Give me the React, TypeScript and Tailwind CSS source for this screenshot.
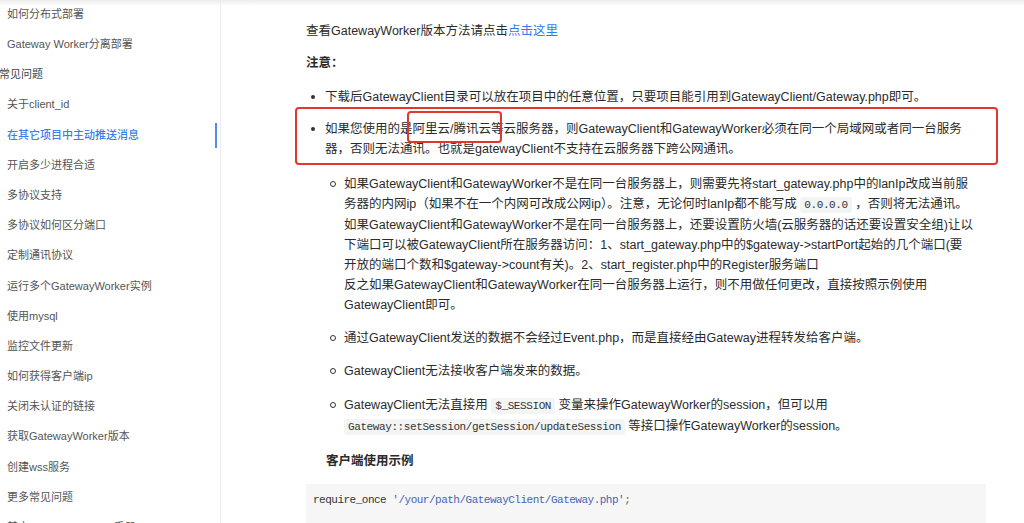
import React from 'react';

const navItems = [
  { label: '如何分布式部署' },
  { label: 'Gateway Worker分离部署' },
  { label: '常见问题', heading: true },
  { label: '关于client_id' },
  { label: '在其它项目中主动推送消息', active: true },
  { label: '开启多少进程合适' },
  { label: '多协议支持' },
  { label: '多协议如何区分端口' },
  { label: '定制通讯协议' },
  { label: '运行多个GatewayWorker实例' },
  { label: '使用mysql' },
  { label: '监控文件更新' },
  { label: '如何获得客户端ip' },
  { label: '关闭未认证的链接' },
  { label: '获取GatewayWorker版本' },
  { label: '创建wss服务' },
  { label: '更多常见问题' },
  { label: '其它 GatewayWorker 手册' },
];

const Code = ({ children }: { children: React.ReactNode }) => (
  <span className="rounded-[3px] bg-[#f3f4f4] px-[4px] py-[2px] font-['Liberation_Mono',monospace] text-[11px] tracking-[-0.4px] text-[#333]">
    {children}
  </span>
);

const Disc = () => (
  <span className="flex w-[19px] shrink-0 justify-start pl-[5px] pt-[8px]">
    <span className="h-[4px] w-[4px] rounded-full bg-[#333]" />
  </span>
);

const Circle = () => (
  <span className="flex w-[19px] shrink-0 justify-start pl-[5px] pt-[7px]">
    <span className="h-[6px] w-[6px] rounded-full border border-[#333]" />
  </span>
);

const Sidebar = () => (
  <aside className="w-[221px] shrink-0 border-r border-[#eaecef]">
    <div className="mt-[-1px] text-[11px]">
      {navItems.map((item) => (
        <div key={item.label} className="relative flex h-[30.2px] items-center">
          {item.heading ? (
            <span className="ml-[-1px] text-[#444]">{item.label}</span>
          ) : (
            <span className={`pl-[7px] ${item.active ? 'font-medium text-[#3d7ee8]' : 'text-[#555]'}`}>
              {item.label}
            </span>
          )}
          {item.active && <span className="absolute right-[3px] top-[3px] h-[25px] w-[2px] bg-[#4f8cf0]" />}
        </div>
      ))}
    </div>
  </aside>
);

export default function App() {
  return (
    <div className="relative h-[523px] w-[1024px] overflow-hidden bg-white font-['Liberation_Sans','Noto_Sans_CJK_SC',sans-serif] text-[12.5px] text-[#2b2b2b]">
      {/* header shadow */}
      <div className="absolute left-0 top-0 z-10 h-[6px] w-full bg-gradient-to-b from-[#ececec] to-transparent" />

      <div className="flex h-full">
        <Sidebar />

        <main className="pl-[85px]">
          <div className="relative w-[680px] pt-[21px] leading-5">
            <p>
              查看GatewayWorker版本方法请点击<a href="#" className="text-[#2f7cf0]">点击这里</a>
            </p>
            <p className="mt-3 font-bold">注意：</p>

            <ul className="mt-[14px]">
              <li className="flex">
                <Disc />
                <span className="whitespace-nowrap">下载后GatewayClient目录可以放在项目中的任意位置，只要项目能引用到GatewayClient/Gateway.php即可。</span>
              </li>
              <li className="mt-[12px] flex">
                <Disc />
                <div>
                  <div className="whitespace-nowrap">
                    如果您使用的是阿里云/腾讯云等云服务器，则GatewayClient和GatewayWorker必须在同一个局域网或者同一台服务
                    <br />
                    器，否则无法通讯。也就是gatewayClient不支持在云服务器下跨公网通讯。
                  </div>

                  <ul className="mt-[15px]">
                    <li className="flex">
                      <Circle />
                      <div className="whitespace-nowrap">
                        如果GatewayClient和GatewayWorker不是在同一台服务器上，则需要先将start_gateway.php中的lanIp改成当前服
                        <br />
                        务器的内网ip（如果不在一个内网可改成公网ip）。注意，无论何时lanIp都不能写成 <Code>0.0.0.0</Code> ，否则将无法通讯。
                        <br />
                        如果GatewayClient和GatewayWorker不是在同一台服务器上，还要设置防火墙(云服务器的话还要设置安全组)让以
                        <br />
                        下端口可以被GatewayClient所在服务器访问：1、start_gateway.php中的$gateway-&gt;startPort起始的几个端口(要
                        <br />
                        开放的端口个数和$gateway-&gt;count有关)。2、start_register.php中的Register服务端口
                        <br />
                        反之如果GatewayClient和GatewayWorker在同一台服务器上运行，则不用做任何更改，直接按照示例使用
                        <br />
                        GatewayClient即可。
                      </div>
                    </li>
                    <li className="mt-[13px] flex">
                      <Circle />
                      <span className="whitespace-nowrap">通过GatewayClient发送的数据不会经过Event.php，而是直接经由Gateway进程转发给客户端。</span>
                    </li>
                    <li className="mt-[13px] flex">
                      <Circle />
                      <span>GatewayClient无法接收客户端发来的数据。</span>
                    </li>
                    <li className="mt-[14px] flex">
                      <Circle />
                      <div className="whitespace-nowrap">
                        GatewayClient无法直接用 <Code>$_SESSION</Code> 变量来操作GatewayWorker的session，但可以用
                        <br />
                        <Code>Gateway::setSession/getSession/updateSession</Code> 等接口操作GatewayWorker的session。
                      </div>
                    </li>
                  </ul>

                  <h4 className="mt-[14px] pl-[1px] font-bold">客户端使用示例</h4>
                </div>
              </li>
            </ul>

            <pre className="mt-[13px] h-[60px] bg-[#f6f6f6] px-[7px] pt-[10px] font-['Liberation_Mono',monospace] text-[11px] leading-[12px] tracking-[-0.5px] text-[#333]">
              require_once <span className="text-[#4565b3]">'/your/path/GatewayClient/Gateway.php'</span>
              <span className="text-[#6b6b2a]">;</span>
            </pre>

            {/* red annotation boxes */}
            <div className="absolute left-[-11px] top-[107px] h-[58px] w-[703px] rounded-[4px] border-2 border-[#e2362e]" />
            <div className="absolute left-[101px] top-[111px] h-[32px] w-[95px] rounded-[4px] border-2 border-[#e2362e]" />
          </div>
        </main>
      </div>
    </div>
  );
}
